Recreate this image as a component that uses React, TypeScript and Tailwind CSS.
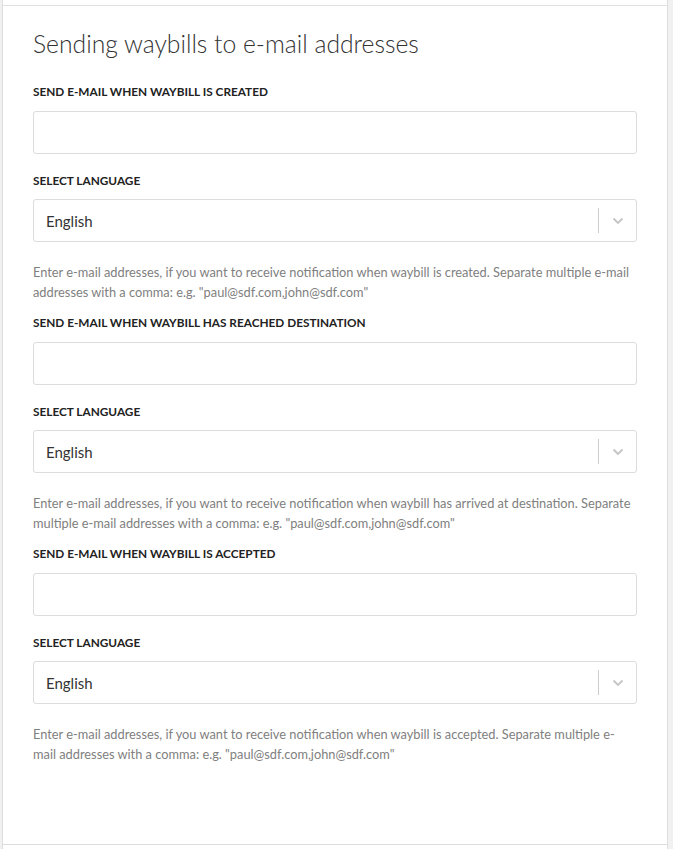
import React from "react";

// Bloques del formulario de notificaciones
const blocks = [
  {
    label: "Send e-mail when waybill is created",
    help: 'Enter e-mail addresses, if you want to receive notification when waybill is created. Separate multiple e-mail addresses with a comma: e.g. "paul@sdf.com,john@sdf.com"',
  },
  {
    label: "Send e-mail when waybill has reached destination",
    help: 'Enter e-mail addresses, if you want to receive notification when waybill has arrived at destination. Separate multiple e-mail addresses with a comma: e.g. "paul@sdf.com,john@sdf.com"',
  },
  {
    label: "Send e-mail when waybill is accepted",
    help: 'Enter e-mail addresses, if you want to receive notification when waybill is accepted. Separate multiple e-mail addresses with a comma: e.g. "paul@sdf.com,john@sdf.com"',
  },
];

function Label({ children }: { children: React.ReactNode }) {
  return (
    <div className="text-[11.8px] leading-4 font-bold uppercase text-[#222]">
      {children}
    </div>
  );
}

function LanguageSelect() {
  return (
    <div className="mt-[10px] h-[43px] border border-[#dcdcdc] rounded-[3px] flex items-center bg-white">
      <span className="flex-1 pl-3 pt-px text-[15px] text-[#333]">English</span>
      <span className="w-px h-[25px] bg-[#cccccc]" />
      <span className="w-[37px] flex justify-center">
        <svg width="12" height="8" viewBox="0 0 12 8" fill="none">
          <path d="M1.5 1.5 6 6l4.5-4.5" stroke="#c4c4c4" strokeWidth="1.8" />
        </svg>
      </span>
    </div>
  );
}

export default function App() {
  return (
    <div
      className="min-h-[849px] bg-[#f1f1f1] pl-[2px] pr-[5px]"
      style={{ fontFamily: "Lato, 'Open Sans', sans-serif" }}
    >
      <div className="bg-white border-x border-[#dedede]">
        <div className="h-[5px]" />
        <section className="border-t border-[#e2e2e2] px-[30px] pt-[23px] pb-[80px]">
          <h2 className="text-[24.7px] leading-[30px] font-light text-[#333]">
            Sending waybills to e-mail addresses
          </h2>
          <div className="mt-[25px]">
            {blocks.map((b, i) => (
              <div key={i} className={i > 0 ? "mt-[13px]" : ""}>
                <Label>{b.label}</Label>
                <input
                  type="text"
                  className="mt-[11px] block w-full h-[43px] border border-[#dcdcdc] rounded-[3px] outline-none"
                />
                <div className="mt-[19px]">
                  <Label>Select language</Label>
                </div>
                <LanguageSelect />
                <p className="mt-[20px] text-[12.8px] leading-5 text-[#808080]">{b.help}</p>
              </div>
            ))}
          </div>
        </section>
        <div className="border-t border-[#dcdcdc] h-[5px]" />
      </div>
    </div>
  );
}
